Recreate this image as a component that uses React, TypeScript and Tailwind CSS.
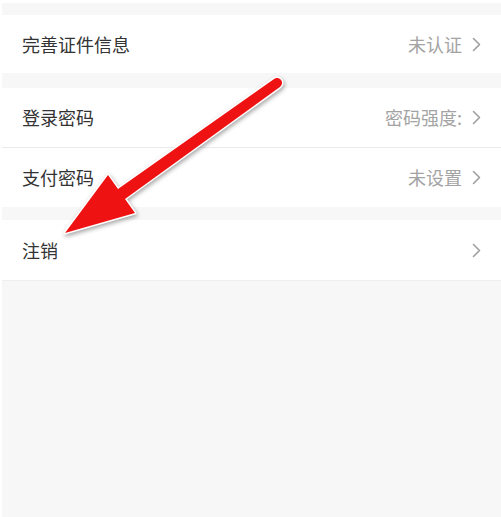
import React from 'react'

const Chevron = () => (
  <svg width="9" height="15" viewBox="0 0 9 15" className="ml-[10px] shrink-0">
    <polyline points="1.5,1.5 7.5,7.5 1.5,13.5" fill="none" stroke="#a0a0a0" strokeWidth="1.6" strokeLinecap="round" strokeLinejoin="round" />
  </svg>
)

const Row = ({ label, value, h }: { label: string; value?: string; h: string }) => (
  <div className={`${h} bg-white flex items-center pl-[20px] pr-[20px]`}>
    <span className="text-[18px] text-[#333333]">{label}</span>
    <div className="ml-auto flex items-center">
      {value && <span className="text-[18px] text-[#a3a3a3]">{value}</span>}
      <Chevron />
    </div>
  </div>
)

export default function App() {
  return (
    <div
      className="relative w-[501px] h-[517px] overflow-hidden bg-[#f7f7f7] border-l-2 border-white"
      style={{ fontFamily: '"Noto Sans CJK SC", "Noto Sans", sans-serif' }}
    >
      <div className="h-[3px] bg-white" />
      <div className="h-[12px]" />
      <Row label="完善证件信息" value="未认证" h="h-[58px]" />
      <div className="h-[15px]" />
      <Row label="登录密码" value="密码强度:" h="h-[59px]" />
      <div className="h-px bg-[#ebebeb]" />
      <Row label="支付密码" value="未设置" h="h-[59px]" />
      <div className="h-[13px]" />
      <Row label="注销" h="h-[60px]" />
      <div className="h-px bg-[#efefef]" />

      <svg
        className="absolute left-[-2px] top-0 pointer-events-none drop-shadow-[1px_2px_2px_rgba(0,0,0,0.35)]"
        width="501"
        height="517"
        viewBox="0 0 501 517"
      >
        <g stroke="#ffffff" strokeWidth="3" strokeLinejoin="round" fill="#ee1212" style={{ paintOrder: 'stroke' }}>
          <path d="M274.1,78.9 L118,189.1 L108,175 L65,233 L135,213 L125,198.9 L279.9,87.1 A5,5 0 0 0 274.1,78.9 Z" />
        </g>
      </svg>
    </div>
  )
}
